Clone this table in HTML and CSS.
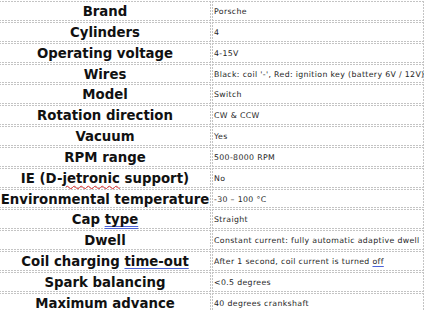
FILE: index.html
```html
<!DOCTYPE html>
<html>
<head>
<meta charset="utf-8">
<link rel="stylesheet" href="styles.css">
</head>
<body>
<div class="spec">
  <div class="k">Brand</div><div class="v">Porsche</div>
  <div class="k">Cylinders</div><div class="v">4</div>
  <div class="k">Operating voltage</div><div class="v">4-15V</div>
  <div class="k">Wires</div><div class="v">Black: coil '-', Red: ignition key (battery 6V / 12V)</div>
  <div class="k">Model</div><div class="v">Switch</div>
  <div class="k">Rotation direction</div><div class="v">CW &amp; CCW</div>
  <div class="k">Vacuum</div><div class="v">Yes</div>
  <div class="k">RPM range</div><div class="v">500-8000 RPM</div>
  <div class="k">IE (D-<span class="spell">jetronic</span> support)</div><div class="v">No</div>
  <div class="k">Environmental temperature</div><div class="v">-30 – 100 °C</div>
  <div class="k">Cap <span class="gram">type</span></div><div class="v">Straight</div>
  <div class="k">Dwell</div><div class="v">Constant current: fully automatic adaptive dwell</div>
  <div class="k">Coil charging <span class="gram1">time-out</span></div><div class="v">After 1 second, coil current is turned <span class="gram1">off</span></div>
  <div class="k">Spark balancing</div><div class="v">&lt;0.5 degrees</div>
  <div class="k">Maximum advance</div><div class="v">40 degrees crankshaft</div>
</div>
</body>
</html>
```
FILE: styles.css
```css
html, body {
  margin: 0;
  padding: 0;
  background: #ffffff;
}
body {
  width: 426px;
  height: 311px;
  overflow: hidden;
}
.spec {
  display: grid;
  grid-template-columns: 212px 212px;
  grid-auto-rows: 19.85px;
  gap: 1px;
  margin: 1px 0 0 -1px;
}
.k, .v {
  box-sizing: border-box;
  white-space: nowrap;
  background-image:
    repeating-linear-gradient(90deg, #c4c4c4 0 2px, transparent 2px 3px),
    repeating-linear-gradient(90deg, #c4c4c4 0 2px, transparent 2px 3px),
    repeating-linear-gradient(180deg, #c4c4c4 0 2px, transparent 2px 3px),
    repeating-linear-gradient(180deg, #c4c4c4 0 2px, transparent 2px 3px);
  background-size: 100% 1px, 100% 1px, 1px 100%, 1px 100%;
  background-position: left top, left bottom, left top, right top;
  background-repeat: no-repeat;
}
.k {
  font-family: "DejaVu Sans", Verdana, sans-serif;
  font-weight: bold;
  font-size: 13.3px;
  color: #111111;
  text-align: center;
  padding-top: 3px;
  line-height: 15px;
}
.v {
  font-family: "DejaVu Sans", Verdana, sans-serif;
  font-size: 7.8px;
  letter-spacing: 0.35px;
  color: #262626;
  padding: 6px 0 0 2px;
  line-height: 10px;
}
.spell {
  text-decoration: underline wavy #e03030;
  text-decoration-thickness: 1px;
  text-underline-offset: 2px;
}
.gram {
  text-decoration: underline double #4d63d8;
  text-decoration-thickness: 1px;
  text-underline-offset: 2px;
}
.gram1 {
  text-decoration: underline #4d63d8;
  text-decoration-thickness: 1px;
  text-underline-offset: 2px;
}
```
